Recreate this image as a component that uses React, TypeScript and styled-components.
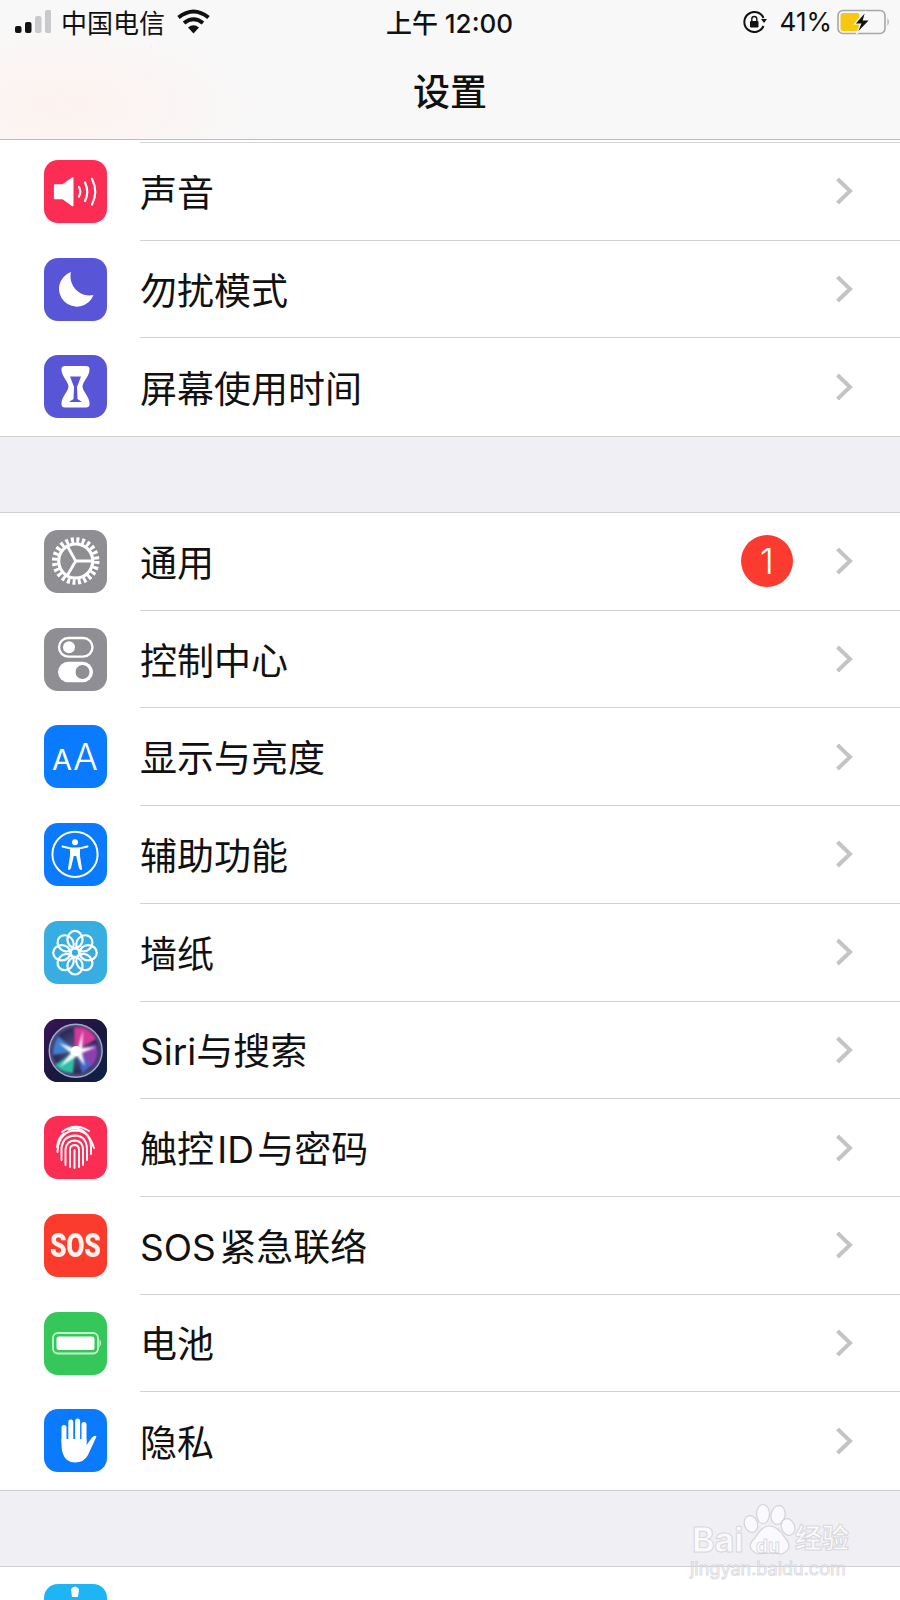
import React from "react";
import styled, { createGlobalStyle } from "styled-components";

const GlobalStyle = createGlobalStyle`
  html, body {
    margin: 0;
    padding: 0;
    background: #efeff4;
  }
  body {
    font-family: Inter, "Noto Sans CJK SC", sans-serif;
    color: #111;
  }
`;

const Page = styled.div`
  position: relative;
  width: 900px;
  height: 1600px;
  overflow: hidden;
  background: #efeff4;
`;

const NavBar = styled.header`
  height: 139px;
  display: flex;
  flex-direction: column;
  border-bottom: 1px solid #bdbdc0;
  background:
    radial-gradient(ellipse 230px 90px at 60px 105px, #fdf3f0 0%, rgba(253, 243, 240, 0) 100%),
    #f8f8f9;
`;

const StatusBar = styled.div`
  height: 43px;
  display: grid;
  grid-template-columns: 1fr auto 1fr;
  align-items: center;
  padding: 0 10px 0 15px;
  font-size: 26px;
`;

const StatusLeft = styled.div`
  display: flex;
  align-items: center;
  gap: 10px;
`;

const StatusRight = styled.div`
  display: flex;
  align-items: center;
  justify-content: flex-end;
  gap: 5px;
`;

const TimeText = styled.span`
  font-weight: 500;
  margin-right: 6px;
`;

const Title = styled.h1`
  margin: 0;
  flex: 1;
  display: flex;
  align-items: center;
  justify-content: center;
  font-size: 37px;
  font-weight: 500;
  padding-bottom: 2px;
`;

const Group = styled.section<{ $first?: boolean }>`
  background: #fff;
  border-bottom: 1px solid #d0d0d4;
  margin-bottom: 75px;
  ${(p) => (p.$first ? "padding-top: 2px;" : "border-top: 1px solid #d0d0d4;")}
`;

const TopRule = styled.div`
  height: 1px;
  margin-left: 140px;
  background: #d5d5d8;
`;

const Row = styled.div`
  height: 97.7px;
  display: flex;
  align-items: stretch;
  padding-left: 43.5px;
  box-sizing: border-box;
`;

const Tile = styled.div<{ $bg: string }>`
  position: relative;
  width: 63px;
  height: 63px;
  margin-top: 17px;
  flex: none;
  border-radius: 14px;
  background: ${(p) => p.$bg};
  overflow: hidden;
  color: #fff;
  display: flex;
  align-items: center;
  justify-content: center;

  svg {
    display: block;
  }
`;

const RowBody = styled.div<{ $last?: boolean }>`
  flex: 1;
  margin-left: 33.5px;
  display: flex;
  align-items: center;
  padding-right: 47px;
  border-bottom: ${(p) => (p.$last ? "none" : "1px solid #d2d2d5")};
`;

const Label = styled.span`
  flex: 1;
  font-size: 37px;
  line-height: 1;
  padding-top: 4px;
`;

const Badge = styled.span`
  width: 52px;
  height: 52px;
  margin-right: 42px;
  border-radius: 50%;
  background: #fb3b30;
  color: #fff;
  font-size: 35px;
  font-weight: 300;
  display: flex;
  align-items: center;
  justify-content: center;
`;

const Letters = styled.span`
  display: flex;
  align-items: baseline;
  gap: 1px;
  line-height: 1;
`;

const SmallA = styled.span`
  font-size: 29px;
  font-weight: 400;
`;

const BigA = styled.span`
  font-size: 37px;
  font-weight: 300;
`;

const SosText = styled.span`
  font-family: Roboto, sans-serif;
  font-weight: 900;
  font-size: 34px;
  letter-spacing: -0.5px;
  transform: scaleX(0.78);
  color: #fff2ec;
`;

const Watermark = styled.div`
  position: absolute;
  left: 690px;
  top: 1500px;
  width: 168px;
  height: 82px;
  pointer-events: none;
`;

const WatermarkPaw = styled.svg`
  position: absolute;
  left: 48px;
  top: 2px;
`;

const WatermarkWord = styled.span<{ $left: number; $top: number; $size: number }>`
  position: absolute;
  left: ${(p) => p.$left}px;
  top: ${(p) => p.$top}px;
  font-size: ${(p) => p.$size}px;
  line-height: 1;
  font-weight: 700;
  white-space: nowrap;
  color: rgba(255, 255, 255, 0.7);
  -webkit-text-stroke: 1px rgba(185, 185, 192, 0.5);
`;

const WatermarkUrl = styled(WatermarkWord)`
  font-weight: 400;
`;

const Chevron = () => (
  <svg width="18" height="28" viewBox="0 0 18 28" fill="none">
    <path d="M2.5 2 L15 14 L2.5 26" stroke="#c4c4c7" strokeWidth="4" />
  </svg>
);

const Tile63 = ({ children }: { children: React.ReactNode }) => (
  <svg width="63" height="63" viewBox="0 0 63 63" fill="none">
    {children}
  </svg>
);

const SoundIcon = () => (
  <Tile63>
    <path d="M10.7 25 H19 L28.7 18 V45.5 L19 38.5 H10.7 Z" fill="#fff" stroke="#fff" strokeWidth="1.6" strokeLinejoin="round" />
    <g stroke="#fff" strokeWidth="2.2" strokeLinecap="round">
      <path d="M35 27 Q37.5 31.7 35 36.5" />
      <path d="M41 22.5 Q45.5 31.7 41 41" />
      <path d="M48 19 Q54.5 31.7 48 44.5" />
    </g>
  </Tile63>
);

const MoonIcon = () => (
  <Tile63>
    <path d="M27 14 A17.8 17.8 0 1 0 49.5 37 A19 19 0 0 1 27 14 Z" fill="#fff" />
  </Tile63>
);

const HourglassIcon = () => (
  <Tile63>
    <path
      d="M21 11 H42 Q46 11 45.5 15 C45 22 39 26 38.5 31.5 C39 37 45 41 45.5 48 Q46 52.5 42 52.5 H21 Q17 52.5 17.5 48 C18 41 24 37 24.5 31.5 C24 26 18 22 17.5 15 Q17 11 21 11 Z"
      fill="#fff"
    />
    <path d="M26 21.5 H37 L33 32 L33.5 44 L38 47 H25 L29.5 44 L30 32 Z" fill="#5856d6" />
  </Tile63>
);

const GearIcon = () => (
  <Tile63>
    <circle cx="31.7" cy="31" r="21" stroke="#fff" strokeWidth="5.5" strokeDasharray="3 2.5" />
    <circle cx="31.7" cy="31" r="17" stroke="#fff" strokeWidth="3.2" />
    <g stroke="#fff" strokeWidth="2.8">
      <path d="M31.7 31 L48.5 31" />
      <path d="M31.7 31 L23 15.5" />
      <path d="M31.7 31 L23 46" />
    </g>
  </Tile63>
);

const ControlIcon = () => (
  <Tile63>
    <rect x="15" y="10" width="33.5" height="18.6" rx="9.3" stroke="#fff" strokeWidth="2.4" />
    <circle cx="25" cy="19.3" r="6" fill="#fff" />
    <rect x="14" y="33.7" width="35" height="20.6" rx="10.3" fill="#fff" />
    <circle cx="38.5" cy="44" r="7" fill="#8e8e93" />
  </Tile63>
);

const AccessIcon = () => (
  <Tile63>
    <circle cx="31" cy="31.3" r="22.6" stroke="#fff" strokeWidth="2" />
    <circle cx="31" cy="19.3" r="3" fill="#fff" />
    <path
      d="M18.5 23.5 L27 25.5 V33 L25 46 M43.5 23.5 L35 25.5 V33 L37 46 M27 25.5 H35 M27 32 H35 M29 32 L26 45 M33 32 L36 45"
      stroke="#fff"
      strokeWidth="2"
      strokeLinecap="round"
    />
    <rect x="27.5" y="25" width="7" height="8" fill="#fff" />
  </Tile63>
);

const FlowerIcon = () => (
  <Tile63>
    {[0, 45, 90, 135, 180, 225, 270, 315].map((a) => (
      <ellipse
        key={a}
        cx="31"
        cy="18.5"
        rx="7.6"
        ry="8.6"
        stroke="#fff"
        strokeWidth="2.2"
        transform={`rotate(${a} 31 31.7)`}
      />
    ))}
    <circle cx="31" cy="31.7" r="4.2" stroke="#fff" strokeWidth="2.2" />
  </Tile63>
);

const SiriIcon = () => (
  <Tile63>
    <defs>
      <linearGradient id="siriBg" x1="0" y1="0" x2="1" y2="1">
        <stop offset="0" stopColor="#3a1258" />
        <stop offset="0.55" stopColor="#18183f" />
        <stop offset="1" stopColor="#0f2246" />
      </linearGradient>
      <radialGradient id="siriOrb" cx="0.5" cy="0.5" r="0.5">
        <stop offset="0" stopColor="#5d5a86" />
        <stop offset="0.8" stopColor="#2c2a58" />
        <stop offset="1" stopColor="#56588a" />
      </radialGradient>
      <filter id="siriBlur" x="-30%" y="-30%" width="160%" height="160%">
        <feGaussianBlur stdDeviation="1.2" />
      </filter>
    </defs>
    <rect width="63" height="63" fill="url(#siriBg)" />
    <circle cx="31.7" cy="31.7" r="26.5" fill="url(#siriOrb)" stroke="#a6a8c6" strokeWidth="1.4" />
    <g filter="url(#siriBlur)">
      <path d="M31 32 L30 9 Q44 5 52 20 Z" fill="#d6389a" />
      <path d="M32 32 L14 17 Q8 27 9 36 Z" fill="#3f7fd0" />
      <path d="M31 32 L11 46 Q18 54 29 54 Z" fill="#2fbfa6" />
      <path d="M32 32 L52 25 Q57 38 47 48 Z" fill="#8c3fb0" />
      <path d="M32 31 L38 54 Q43 52 47 46 Z" fill="#4468c4" />
    </g>
    <path
      d="M34 29 L39 11 L38 29 L52 28 L38 34 L41 47 L33 37 L16 48 L27 34 L15 24 L29 29 Z"
      fill="#fff"
      filter="url(#siriBlur)"
      opacity="0.95"
    />
    <circle cx="32" cy="32" r="5" fill="#fff" />
  </Tile63>
);

const FingerprintIcon = () => (
  <Tile63>
    <g stroke="#fff" strokeWidth="1.9" strokeLinecap="round">
      <path d="M18 16 Q31 6 45 15" />
      <path d="M13 31 Q14 21 20 17.5 M24 13.5 Q42 8 50 32" />
      <path d="M13.5 36 L14 30 Q18 15 31 14.5 Q47 15 47 32 V38" />
      <path d="M17.5 44 V32 Q19 20 31 19.5 Q42.5 20 43 33 V44" />
      <path d="M21.5 49 V33 Q23 24.5 31 24.5 Q38.5 25 39 33 V49" />
      <path d="M26 51 V33 Q26.5 29 31 29 Q35 29.5 35 34 V51" />
      <path d="M30.5 34 V52" />
    </g>
  </Tile63>
);

const BatteryIcon = () => (
  <Tile63>
    <rect x="9" y="21" width="45" height="20.5" rx="5" stroke="#c8f5d2" strokeWidth="1.8" />
    <rect x="12.5" y="24.5" width="38" height="13.5" rx="2.5" fill="#fff" />
    <path d="M55.5 27 Q58.5 31 55.5 35.5 Z" fill="#c8f5d2" />
  </Tile63>
);

const HandIcon = () => (
  <Tile63>
    <g stroke="#fff" strokeWidth="5" strokeLinecap="round">
      <path d="M20 33 V18.5" />
      <path d="M26.8 33 V13" />
      <path d="M33.6 33 V12" />
      <path d="M40 33 V15.5" />
    </g>
    <path
      d="M17.5 30 H42.5 V36 L48 28.5 Q51 25.5 52.5 27.5 L44 46 Q40 53.5 31 53.5 Q22 53.5 19 45 Q17.5 41 17.5 36 Z"
      fill="#fff"
    />
  </Tile63>
);

const MusicIcon = () => (
  <Tile63>
    <path d="M27 5 Q31 0 35 5 L34 13 H28 Z" fill="#fff" />
  </Tile63>
);

type RowItem = { label: string; bg: string; icon: React.ReactNode; badge?: string };

const firstGroup: RowItem[] = [
  { label: "声音", bg: "#fb2d55", icon: <SoundIcon /> },
  { label: "勿扰模式", bg: "#5856d6", icon: <MoonIcon /> },
  { label: "屏幕使用时间", bg: "#5856d6", icon: <HourglassIcon /> },
];

const secondGroup: RowItem[] = [
  { label: "通用", bg: "#8e8e93", icon: <GearIcon />, badge: "1" },
  { label: "控制中心", bg: "#8e8e93", icon: <ControlIcon /> },
  {
    label: "显示与亮度",
    bg: "#0a7aff",
    icon: (
      <Letters>
        <SmallA>A</SmallA>
        <BigA>A</BigA>
      </Letters>
    ),
  },
  { label: "辅助功能", bg: "#0a7aff", icon: <AccessIcon /> },
  { label: "墙纸", bg: "#36aee2", icon: <FlowerIcon /> },
  { label: "Siri与搜索", bg: "#18183f", icon: <SiriIcon /> },
  { label: "触控\u200aID\u200a与密码", bg: "#fb2d55", icon: <FingerprintIcon /> },
  { label: "SOS\u200a紧急联络", bg: "#fb3c2d", icon: <SosText>SOS</SosText> },
  { label: "电池", bg: "#35c759", icon: <BatteryIcon /> },
  { label: "隐私", bg: "#0a7aff", icon: <HandIcon /> },
];

const SettingRow = ({ item, last }: { item: RowItem; last?: boolean }) => (
  <Row>
    <Tile $bg={item.bg}>{item.icon}</Tile>
    <RowBody $last={last}>
      <Label>{item.label}</Label>
      {item.badge && <Badge>{item.badge}</Badge>}
      <Chevron />
    </RowBody>
  </Row>
);

export default function App() {
  return (
    <Page>
      <GlobalStyle />
      <NavBar>
        <StatusBar>
          <StatusLeft>
            <svg width="36" height="24" viewBox="0 0 36 24">
              <rect x="0" y="16" width="6.5" height="7" rx="2" fill="#111" />
              <rect x="10" y="12" width="6.5" height="11" rx="2" fill="#111" />
              <rect x="20" y="6" width="6.5" height="17" rx="2" fill="#c9c9cb" />
              <rect x="30" y="0" width="6.5" height="23" rx="2" fill="#c9c9cb" />
            </svg>
            <span>中国电信</span>
            <svg width="33" height="25" viewBox="0 0 33 25" fill="none" style={{ marginLeft: 2 }}>
              <path d="M1.5 8.5 Q16.5 -3.5 31.5 8.5" stroke="#111" strokeWidth="4" />
              <path d="M7 14 Q16.5 6.5 26 14" stroke="#111" strokeWidth="4" />
              <path d="M11 18.5 Q16.5 14 22 18.5 L16.5 24.5 Z" fill="#111" />
            </svg>
          </StatusLeft>
          <TimeText>上午 12:00</TimeText>
          <StatusRight>
            <svg width="24" height="22" viewBox="0 0 24 22" fill="none" style={{ marginRight: 8 }}>
              <path d="M20.5 7 A10 10 0 1 0 20.5 15" stroke="#111" strokeWidth="2" />
              <path d="M18 8 H24 L21 12 Z" fill="#111" />
              <rect x="7" y="10" width="8.5" height="6.5" rx="1" fill="#111" />
              <path d="M8.8 10 V8 A2.5 2.5 0 0 1 13.8 8 V10" stroke="#111" strokeWidth="1.4" />
            </svg>
            <span>41%</span>
            <svg width="53" height="26" viewBox="0 0 53 26" fill="none">
              <rect x="1" y="1.5" width="47" height="23" rx="5" stroke="#a6a6a8" strokeWidth="1.6" />
              <rect x="3.5" y="4" width="19" height="18" rx="2.5" fill="#f6c80f" />
              <path d="M50.5 9 Q53 13 50.5 17 Z" fill="#a6a6a8" />
              <path d="M29 2 L17.5 15 H23.5 L19.5 25 L33 11 H26.5 Z" fill="#111" stroke="#f8f8f9" strokeWidth="1.2" />
            </svg>
          </StatusRight>
        </StatusBar>
        <Title>设置</Title>
      </NavBar>

      <Group $first>
        <TopRule />
        {firstGroup.map((item, i) => (
          <SettingRow key={item.label} item={item} last={i === firstGroup.length - 1} />
        ))}
      </Group>

      <Group>
        {secondGroup.map((item, i) => (
          <SettingRow key={item.label} item={item} last={i === secondGroup.length - 1} />
        ))}
      </Group>

      <Group>
        <Row>
          <Tile $bg="#1fb5f5">
            <MusicIcon />
          </Tile>
        </Row>
      </Group>

      <Watermark>
        <WatermarkPaw width="72" height="66" viewBox="0 0 72 66">
          <g fill="rgba(255,255,255,0.7)" stroke="rgba(185,185,192,0.55)" strokeWidth="1.2">
            <ellipse cx="25" cy="12" rx="6.5" ry="9.5" />
            <ellipse cx="40" cy="13" rx="7" ry="9.5" transform="rotate(12 40 13)" />
            <ellipse cx="13" cy="22" rx="6.5" ry="8.5" transform="rotate(-20 13 22)" />
            <ellipse cx="50" cy="25" rx="6.5" ry="8.5" transform="rotate(-20 50 25)" />
            <path d="M31 24 Q40 24 47 36 Q56 46 44 52 Q32 50 20 52 Q6 46 17 36 Q24 24 31 24 Z" />
          </g>
        </WatermarkPaw>
        <WatermarkWord $left={2} $top={23} $size={34}>
          Bai
        </WatermarkWord>
        <WatermarkWord $left={66} $top={37} $size={19}>
          du
        </WatermarkWord>
        <WatermarkWord $left={105} $top={25} $size={27}>
          经验
        </WatermarkWord>
        <WatermarkUrl $left={0} $top={60} $size={18}>
          jingyan.baidu.com
        </WatermarkUrl>
      </Watermark>
    </Page>
  );
}
